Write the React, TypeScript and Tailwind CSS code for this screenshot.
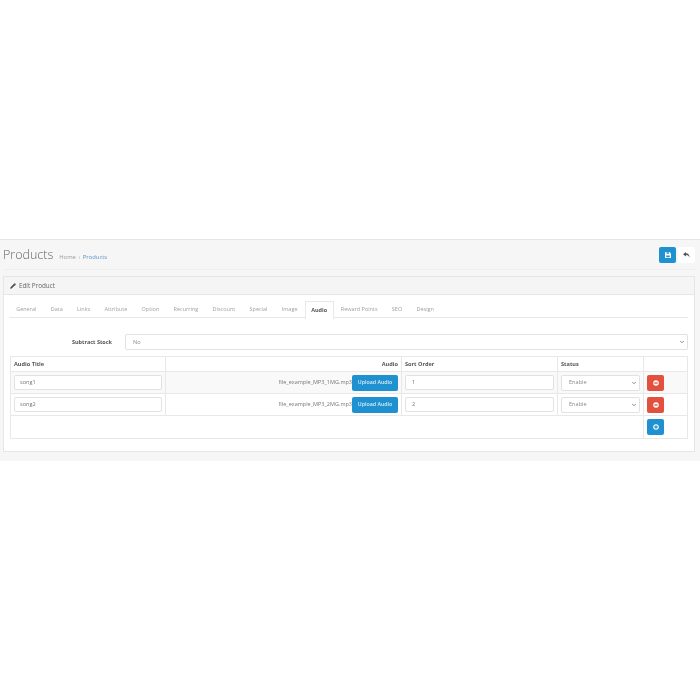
import { Pencil, ChevronDown } from 'lucide-react';

const TABS = ['General', 'Data', 'Links', 'Attribute', 'Option', 'Recurring', 'Discount', 'Special', 'Image', 'Audio', 'Reward Points', 'SEO', 'Design'];

const SONGS = [
  { title: 'song1', file: 'file_example_MP3_1MG.mp3', sort: '1' },
  { title: 'song2', file: 'file_example_MP3_2MG.mp3', sort: '2' },
];

function CircleSign({ color, plus }: { color: string; plus?: boolean }) {
  return (
    <svg width="6" height="6" viewBox="0 0 14 14">
      <circle cx="7" cy="7" r="6.5" fill="white" />
      <rect x="3" y="5.5" width="8" height="3" fill={color} />
      {plus && <rect x="5.5" y="3" width="3" height="8" fill={color} />}
    </svg>
  );
}

function FakeSelect({ value, className }: { value: string; className: string }) {
  return (
    <div className={`flex items-center justify-between h-[16px] bg-white border border-[#e2e2e2] rounded-[2px] text-[5.6px] text-[#8a8a8a] ${className}`}>
      <span>{value}</span>
      <ChevronDown size={6} strokeWidth={3} className="text-[#666]" />
    </div>
  );
}

function Cell({ children, className = '' }: { children?: React.ReactNode; className?: string }) {
  return <div className={`flex items-center border-r border-[#e8e8e8] last:border-r-0 ${className}`}>{children}</div>;
}

function SongRow({ title, file, sort, shaded }: { title: string; file: string; sort: string; shaded: boolean }) {
  return (
    <div className={`grid grid-cols-[155px_236px_156px_86px_1fr] h-[22px] border-b border-[#e8e8e8] ${shaded ? 'bg-[#f9f9f9]' : 'bg-white'}`}>
      <Cell className="px-[3px]">
        <div className="flex items-center w-full h-[15px] pl-[5px] bg-white border border-[#e2e2e2] rounded-[2px] text-[5.6px] text-[#777]">{title}</div>
      </Cell>
      <Cell className="justify-end pr-[3px]">
        <span className="text-[5.5px] text-[#777]">{file}</span>
        <button className="flex items-center justify-center w-[46px] h-[16px] bg-[#1f90d0] rounded-[2px] text-[5.3px] font-semibold text-[#d8eefa]">Upload Audio</button>
      </Cell>
      <Cell className="px-[3px]">
        <div className="flex items-center w-full h-[15px] pl-[6px] bg-white border border-[#e2e2e2] rounded-[2px] text-[5.6px] text-[#777]">{sort}</div>
      </Cell>
      <Cell className="px-[3px]">
        <FakeSelect value="Enable" className="w-full pl-[7px] pr-[2px]" />
      </Cell>
      <Cell className="pl-[3px]">
        <button className="flex items-center justify-center w-[17px] h-[16px] bg-[#e3503e] rounded-[2px]">
          <CircleSign color="#e3503e" />
        </button>
      </Cell>
    </div>
  );
}

export default function App() {
  return (
    <div className="min-h-screen bg-white pt-[239px] font-['Open_Sans',sans-serif]">
      <div className="bg-[#f6f6f6] border-t border-[#e4e4e4] h-[222px] px-[3px] blur-[0.3px]">
        <div className="flex items-center justify-between h-[29px] mt-[1px] pr-[2px] border-b border-[#efefef]">
          <div className="flex items-baseline">
            <h1 className="text-[12.5px] font-light text-[#666] leading-none">Products</h1>
            <span className="ml-[6px] text-[5.9px] text-[#9a9a9a]">Home</span>
            <span className="mx-[2.5px] text-[5.9px] text-[#aaa]">›</span>
            <span className="text-[5.9px] text-[#5b93c4]">Products</span>
          </div>
          <div className="flex gap-[2px]">
            <button className="flex items-center justify-center w-[17px] h-[16px] bg-[#1f90d0] rounded-[2px]">
              <svg width="6" height="6" viewBox="0 0 12 12">
                <path d="M0 1a1 1 0 0 1 1-1h8l3 3v8a1 1 0 0 1-1 1H1a1 1 0 0 1-1-1z" fill="white" />
                <rect x="3" y="0.5" width="5" height="3" fill="#1f90d0" />
                <rect x="2.5" y="7" width="7" height="3.5" fill="#1f90d0" />
              </svg>
            </button>
            <button className="flex items-center justify-center w-[17px] h-[16px] bg-white rounded-[2px]">
              <svg width="7" height="6" viewBox="0 0 14 12">
                <path d="M6 0 0 4.5 6 9V6c3.5 0 5.5 1.5 6.5 5 1-5-1.5-8-6.5-8.5z" fill="#555" />
              </svg>
            </button>
          </div>
        </div>

        <div className="mt-[6px] w-[692px] h-[176px] bg-white border border-[#e6e6e6]">
          <div className="flex items-center gap-[3px] h-[18px] pl-[6px] bg-[#f5f5f5] border-b border-[#e6e6e6] text-[6.3px] text-[#666]">
            <Pencil size={6} fill="#555" stroke="#555" />
            <span>Edit Product</span>
          </div>

          <div className="px-[6px]">
            <div className="flex h-[17px] mt-[6px] -ml-px border-b border-[#e8e8e8]">
              {TABS.map((tab) =>
                tab === 'Audio' ? (
                  <div key={tab} className="flex items-center h-[18px] px-[5.5px] bg-white border border-b-0 border-[#e8e8e8] text-[5.5px] font-bold text-[#555]">
                    {tab}
                  </div>
                ) : (
                  <div key={tab} className="flex items-center h-[17px] px-[7.15px] text-[5.5px] text-[#a2a2a2]">
                    {tab}
                  </div>
                ),
              )}
            </div>

            <div className="flex items-center mt-[16px] h-[16px]">
              <label className="w-[115px] pr-[13px] text-right text-[5.5px] font-bold text-[#555]">Subtract Stock</label>
              <FakeSelect value="No" className="flex-1 pl-[7px] pr-[2px]" />
            </div>

            <div className="mt-[6px] border border-b-0 border-[#e8e8e8] text-[5.6px]">
              <div className="grid grid-cols-[155px_236px_156px_86px_1fr] h-[15px] border-b border-[#e8e8e8] font-bold text-[#555]">
                <Cell className="pl-[3px]">Audio Title</Cell>
                <Cell className="justify-end pr-[3px]">Audio</Cell>
                <Cell className="pl-[3px]">Sort Order</Cell>
                <Cell className="pl-[3px]">Status</Cell>
                <Cell />
              </div>
              {SONGS.map((song, i) => (
                <SongRow key={song.title} title={song.title} file={song.file} sort={song.sort} shaded={i === 0} />
              ))}
              <div className="grid grid-cols-[633px_1fr] h-[23px] border-b border-[#e8e8e8]">
                <Cell />
                <Cell className="pl-[3px]">
                  <button className="flex items-center justify-center w-[17px] h-[16px] bg-[#1f90d0] rounded-[2px]">
                    <CircleSign color="#1f90d0" plus />
                  </button>
                </Cell>
              </div>
            </div>
          </div>
        </div>
      </div>
    </div>
  );
}
